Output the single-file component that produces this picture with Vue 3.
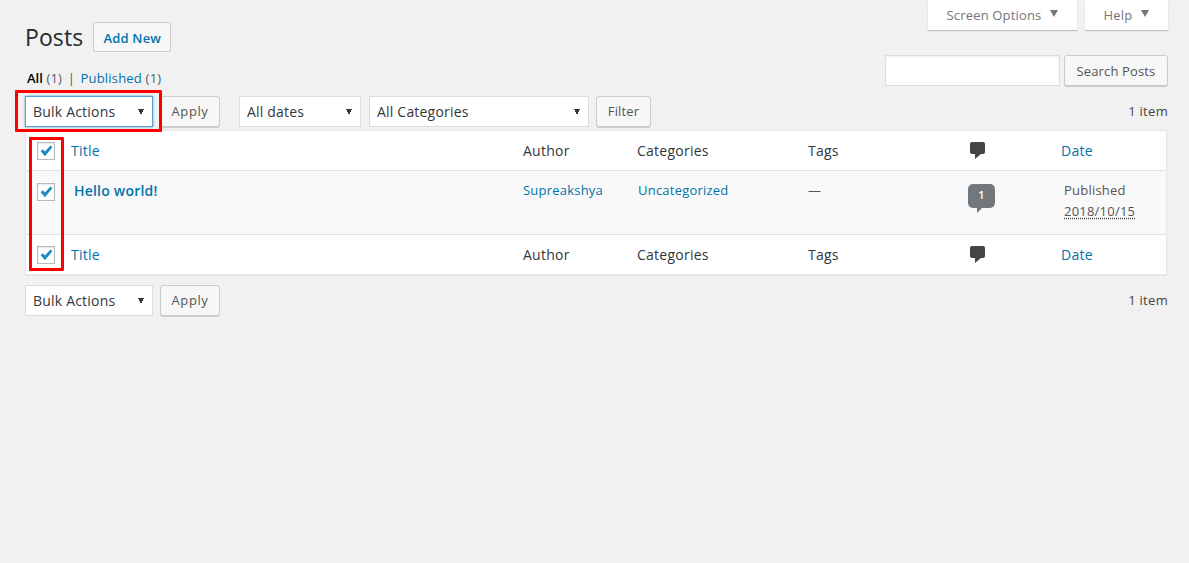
<script setup>
const bulk = ['Bulk Actions']
</script>

<template>
  <div class="wrap">
    <header class="top">
      <div class="heading">
        <div class="title-row">
          <h1>Posts</h1>
          <a class="add-new">Add New</a>
        </div>
        <ul class="views">
          <li class="current"><b>All</b> <span class="count">(1)</span></li>
          <li class="sep">|</li>
          <li><a>Published</a> <span class="count">(1)</span></li>
        </ul>
      </div>
      <div class="right">
        <div class="screen-links">
          <button class="tab tab-options">Screen Options<span class="tri"></span></button>
          <button class="tab tab-help">Help<span class="tri"></span></button>
        </div>
        <div class="search">
          <input class="search-input" type="text" />
          <button class="btn search-btn">Search Posts</button>
        </div>
      </div>
    </header>

    <div class="tablenav">
      <div class="bulk-wrap">
        <select class="sel sel-bulk focused"><option v-for="b in bulk" :key="b">{{ b }}</option></select>
        <span class="mark mark-bulk"></span>
      </div>
      <button class="btn apply">Apply</button>
      <select class="sel sel-dates"><option>All dates</option></select>
      <select class="sel sel-cats"><option>All Categories</option></select>
      <button class="btn filter">Filter</button>
      <span class="items">1 item</span>
    </div>

    <div class="table-wrap">
      <span class="mark mark-checks"></span>
      <table class="posts">
        <colgroup>
          <col class="c-cb" /><col class="c-title" /><col class="c-author" /><col class="c-cats" /><col class="c-tags" /><col class="c-com" /><col class="c-date" />
        </colgroup>
        <thead>
          <tr class="hrow">
            <td class="cb"><span class="check"><svg viewBox="0 0 16 16"><path d="M2.6 8.2 L4.8 6.2 L7 8.6 L12.4 2.4 L14.4 4.2 L7 13.2 Z" /></svg></span></td>
            <td><a>Title</a></td>
            <td>Author</td>
            <td>Categories</td>
            <td>Tags</td>
            <td class="com-cell"><svg class="bubble" viewBox="0 0 15 17"><path d="M2 0 H13 Q15 0 15 2 V10 Q15 12 13 12 H11 L5 17 V12 H2 Q0 12 0 10 V2 Q0 0 2 0 Z" /></svg></td>
            <td><a>Date</a></td>
          </tr>
        </thead>
        <tbody>
          <tr class="brow">
            <td class="cb"><span class="check"><svg viewBox="0 0 16 16"><path d="M2.6 8.2 L4.8 6.2 L7 8.6 L12.4 2.4 L14.4 4.2 L7 13.2 Z" /></svg></span></td>
            <td class="post-title"><a>Hello world!</a></td>
            <td class="small"><a>Supreakshya</a></td>
            <td class="small cat-cell"><a>Uncategorized</a></td>
            <td class="small">—</td>
            <td class="com-cell"><span class="count-bubble">1</span></td>
            <td class="small date-cell">Published<br /><abbr>2018/10/15</abbr></td>
          </tr>
        </tbody>
        <tfoot>
          <tr class="hrow">
            <td class="cb"><span class="check"><svg viewBox="0 0 16 16"><path d="M2.6 8.2 L4.8 6.2 L7 8.6 L12.4 2.4 L14.4 4.2 L7 13.2 Z" /></svg></span></td>
            <td><a>Title</a></td>
            <td>Author</td>
            <td>Categories</td>
            <td>Tags</td>
            <td class="com-cell"><svg class="bubble" viewBox="0 0 15 17"><path d="M2 0 H13 Q15 0 15 2 V10 Q15 12 13 12 H11 L5 17 V12 H2 Q0 12 0 10 V2 Q0 0 2 0 Z" /></svg></td>
            <td><a>Date</a></td>
          </tr>
        </tfoot>
      </table>
    </div>

    <div class="tablenav bottom">
      <select class="sel sel-bulk"><option>Bulk Actions</option></select>
      <button class="btn apply">Apply</button>
      <span class="items">1 item</span>
    </div>
  </div>
</template>

<style>
html, body { margin: 0; background: #f1f1f1; }
</style>

<style scoped>
.wrap {
  padding: 0 21px 0 25px;
  min-height: 563px;
  box-sizing: border-box;
  background: #f1f1f1;
  font-family: "Open Sans", "Noto Sans", sans-serif;
  font-size: 13px;
  color: #444;
}
a { color: #0073aa; text-decoration: none; }

.top { display: flex; justify-content: space-between; height: 96px; }
.title-row { display: flex; align-items: flex-start; padding-top: 22px; height: 30px; }
h1 { margin: 0 10px 0 0; font-size: 23px; line-height: 30px; font-weight: 400; color: #23282d; letter-spacing: 0.1px; }
.add-new {
  box-sizing: border-box; height: 30px; width: 78px; text-align: center; line-height: 30px;
  border: 1px solid #ccc; border-radius: 2px; background: #f7f7f7; font-size: 13px; font-weight: 600; letter-spacing: 0.15px;
}
.views { list-style: none; margin: 17px 0 0 2px; padding: 0; display: flex; gap: 5.5px; height: 18px; line-height: 18px; font-size: 13px; letter-spacing: 0.2px; }
.views .current { color: #000; }
.views b { font-weight: 600; letter-spacing: 0; }
.views .count { color: #555d66; }
.sep { color: #555; }

.right { display: flex; flex-direction: column; align-items: flex-end; }
.screen-links { display: flex; gap: 8px; }
.tab {
  height: 30px; box-sizing: border-box; border: 0; border-radius: 0; background: #fff;
  box-shadow: 0 1px 1px rgba(0,0,0,.2); font: inherit; color: #72777c; letter-spacing: 0.16px;
  display: flex; align-items: center; justify-content: center; padding: 0; gap: 9px;
}
.tab-options { width: 149px; }
.tab-help { width: 83px; }
.tri { width: 0; height: 0; border-left: 4.5px solid transparent; border-right: 4.5px solid transparent; border-top: 7px solid #72777c; margin-bottom: 3px; }
.search { display: flex; gap: 4px; margin-top: 25px; }
.search-input { box-sizing: border-box; width: 175px; height: 31px; border: 1px solid #ddd; background: #fff; box-shadow: inset 0 1px 2px rgba(0,0,0,.07); padding: 0; margin: 0; outline: 0; }

.btn {
  box-sizing: border-box; height: 31px; padding: 0; margin: 0; border: 1px solid #ccc; border-radius: 3px; background: #f7f7f7;
  box-shadow: 0 1px 0 #ccc; font: inherit; color: #555; letter-spacing: 0.14px; text-align: center;
}
.search-btn { width: 104px; }
.apply { width: 60px; margin-left: 7px; letter-spacing: 0.6px; padding-bottom: 2px; }
.filter { width: 55px; margin-left: 7px; padding-bottom: 2px; }

.tablenav { display: flex; align-items: flex-start; height: 31px; position: relative; }
.items { margin-left: auto; line-height: 30px; color: #444; letter-spacing: 0.3px; }
.bulk-wrap { position: relative; height: 31px; }

.sel {
  appearance: none; -webkit-appearance: none; display: block; box-sizing: border-box; height: 31px; margin: 0; padding: 0 0 0 7px;
  border: 1px solid #ddd; border-radius: 0; font: inherit; font-size: 14px; letter-spacing: 0.2px; color: #32373c; outline: 0;
  background-color: #fff;
  background-image: linear-gradient(to top right, transparent 50%, #32373c 50%), linear-gradient(to top left, transparent 50%, #32373c 50%);
  background-size: 3px 6px, 3px 6px;
  background-repeat: no-repeat;
  background-position: right 11px top 12px, right 8px top 12px;
}
.sel-bulk { width: 128px; }
.sel-dates { width: 122px; margin-left: 19px; }
.sel-cats { width: 220px; margin-left: 8px; }
.focused { border-color: #5b9dd9; box-shadow: 0 0 2px rgba(30,140,190,.8); }

.mark { position: absolute; border: 3px solid #f00; box-sizing: border-box; pointer-events: none; z-index: 2; border-radius: 1px; }
.mark-bulk { left: -10px; top: -6px; width: 147px; height: 42px; }
.mark-checks { left: 4px; top: 7px; width: 35px; height: 134px; }

.table-wrap { position: relative; margin-top: 3px; width: 1142px; }
.posts {
  width: 1142px; table-layout: fixed; border-collapse: separate; border-spacing: 0; background: #fff;
  border: 1px solid #e5e5e5; box-shadow: 0 1px 1px rgba(0,0,0,.04); box-sizing: border-box;
}
.c-cb { width: 35px; }
.c-title { width: 452px; }
.c-author { width: 114px; }
.c-cats { width: 171px; }
.c-tags { width: 152px; }
.c-com { width: 101px; }
td { padding: 0 0 0 10px; vertical-align: middle; font-size: 14px; letter-spacing: 0.25px; color: #32373c; box-sizing: border-box; }
.hrow td { height: 40px; }
thead td { border-bottom: 1px solid #e1e1e1; }
tfoot td { border-top: 1px solid #e1e1e1; }
.brow td { height: 63px; background: #f9f9f9; vertical-align: top; padding-top: 9px; }
.cb { padding: 0 0 0 11px !important; }
.brow .cb { padding-top: 12px !important; }
.check {
  display: block; box-sizing: border-box; width: 18px; height: 18px; border: 1px solid #b4b9be; background: #fff;
  box-shadow: inset 0 1px 2px rgba(0,0,0,.1);
}
.check svg { display: block; width: 16px; height: 16px; fill: #1e8cbe; }
.post-title { padding-left: 13px !important; padding-top: 10px !important; font-size: 14px; font-weight: 600; letter-spacing: 0.2px; }
.post-title a { color: #0073aa; }
.small { font-size: 13px; letter-spacing: 0.22px; line-height: 20px; color: #555; }
.cat-cell { padding-left: 11px; }
.com-cell { padding-left: 20px !important; }
.brow .com-cell { padding-left: 18px !important; padding-top: 13px; }
.bubble { display: block; width: 15px; height: 17px; fill: #444; }
.count-bubble {
  display: block; position: relative; box-sizing: border-box; width: 27px; height: 24px; border-radius: 5px; background: #72777c;
  color: #fff; font-size: 11px; font-weight: 600; letter-spacing: 0; text-align: center; line-height: 22px;
}
.count-bubble::after {
  content: ""; position: absolute; left: 9px; top: 100%; border-top: 5px solid #72777c; border-right: 5px solid transparent;
}
.date-cell { padding-left: 13px !important; line-height: 21px; }
abbr { text-decoration: underline dotted #444; text-underline-offset: 2px; }
.bottom { margin-top: 10px; }
</style>
